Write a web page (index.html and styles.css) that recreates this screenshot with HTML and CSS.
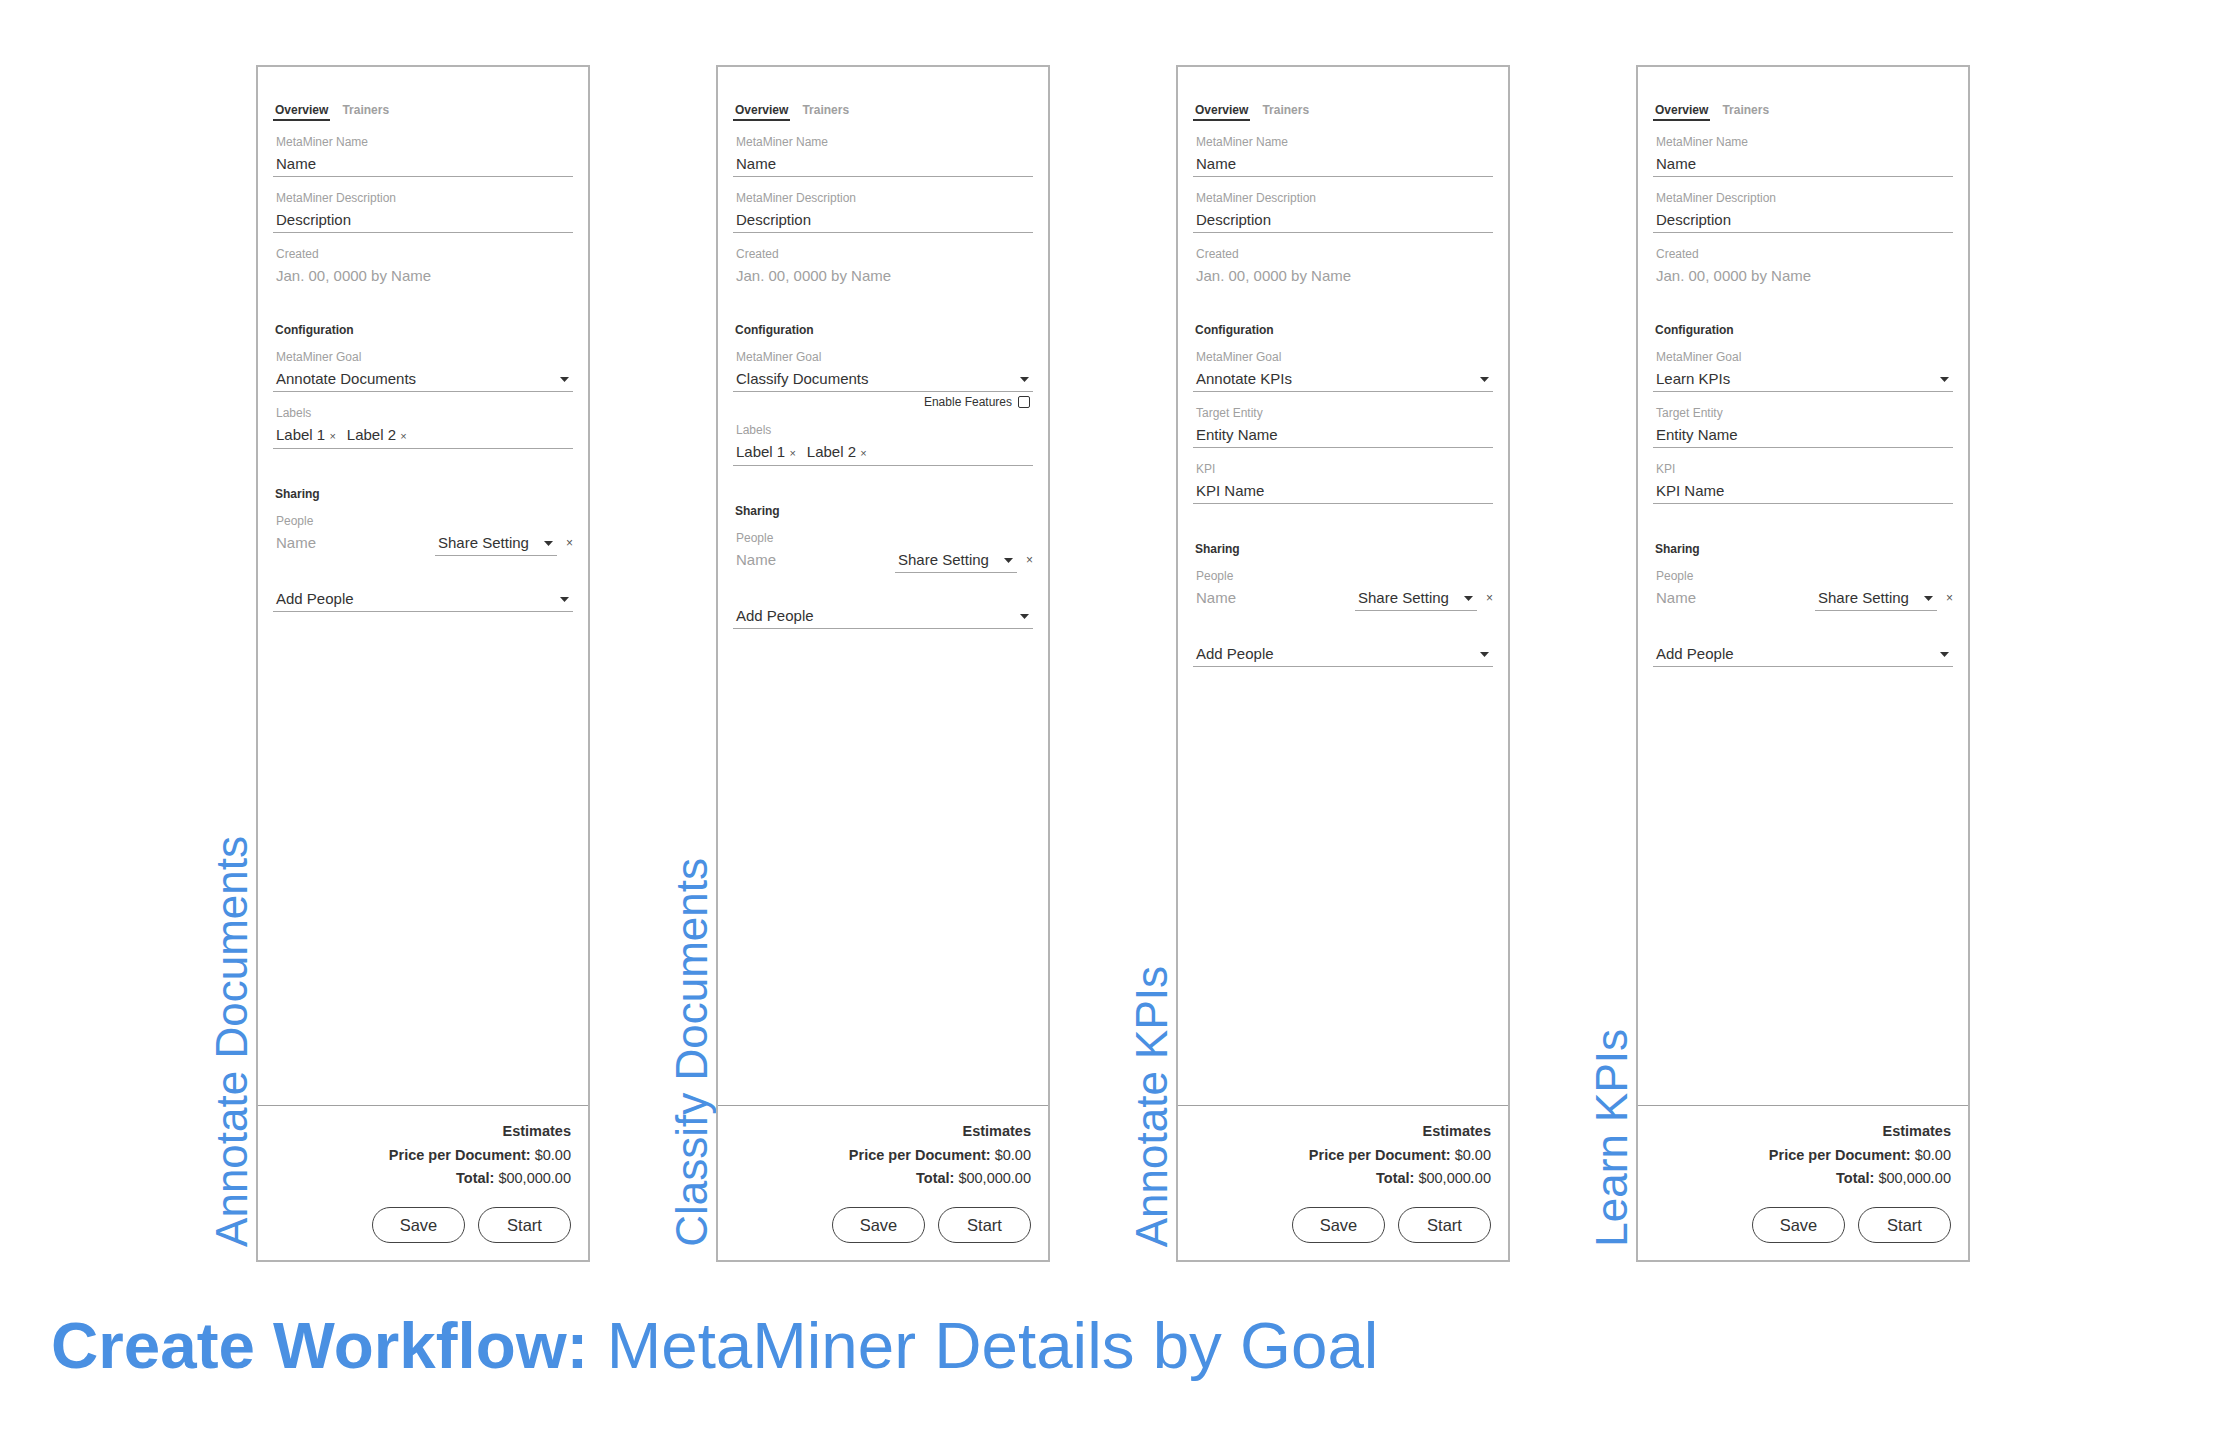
FILE: index.html
```html
<!DOCTYPE html>
<html lang="en">
<head>
    <meta charset="UTF-8">
    <meta name="viewport" content="width=device-width, initial-scale=1.0">
    <title>Create Workflow: MetaMiner Details by Goal</title>
    <link rel="stylesheet" href="styles.css">
</head>
<body>
    <div class="board">

        <!-- Annotate Documents -->
        <section class="goal">
            <h2 class="goal-label">Annotate Documents</h2>
            <div class="panel">
                <div class="panel-body">
                    <div class="tabs">
                        <span class="tab tab-active">Overview</span>
                        <span class="tab">Trainers</span>
                    </div>
                    <div class="field">
                        <div class="field-label">MetaMiner Name</div>
                        <div class="field-value">Name</div>
                    </div>
                    <div class="field">
                        <div class="field-label">MetaMiner Description</div>
                        <div class="field-value">Description</div>
                    </div>
                    <div class="field field-static">
                        <div class="field-label">Created</div>
                        <div class="field-value">Jan. 00, 0000 by Name</div>
                    </div>

                    <h3 class="section-title section-first">Configuration</h3>
                    <div class="field">
                        <div class="field-label">MetaMiner Goal</div>
                        <div class="field-value select">Annotate Documents <svg class="caret" viewBox="0 0 9 5"><polygon points="0,0 9,0 4.5,5"/></svg></div>
                    </div>
                    <div class="field">
                        <div class="field-label">Labels</div>
                        <div class="field-value chips">
                            <span class="chip">Label 1 <span class="chip-x">×</span></span>
                            <span class="chip">Label 2 <span class="chip-x">×</span></span>
                        </div>
                    </div>

                    <h3 class="section-title">Sharing</h3>
                    <div class="field field-people">
                        <div class="field-label">People</div>
                        <div class="people-row">
                            <span class="person">Name</span>
                            <div class="share-select">Share Setting <svg class="caret" viewBox="0 0 9 5"><polygon points="0,0 9,0 4.5,5"/></svg></div>
                            <span class="remove">×</span>
                        </div>
                    </div>
                    <div class="field field-add">
                        <div class="field-value select">Add People <svg class="caret" viewBox="0 0 9 5"><polygon points="0,0 9,0 4.5,5"/></svg></div>
                    </div>
                </div>
                <div class="panel-footer">
                    <div class="estimates-title">Estimates</div>
                    <div><b>Price per Document:</b> $0.00</div>
                    <div><b>Total:</b> $00,000.00</div>
                    <div class="actions">
                        <button>Save</button>
                        <button>Start</button>
                    </div>
                </div>
            </div>
        </section>

        <!-- Classify Documents -->
        <section class="goal">
            <h2 class="goal-label">Classify Documents</h2>
            <div class="panel">
                <div class="panel-body">
                    <div class="tabs">
                        <span class="tab tab-active">Overview</span>
                        <span class="tab">Trainers</span>
                    </div>
                    <div class="field">
                        <div class="field-label">MetaMiner Name</div>
                        <div class="field-value">Name</div>
                    </div>
                    <div class="field">
                        <div class="field-label">MetaMiner Description</div>
                        <div class="field-value">Description</div>
                    </div>
                    <div class="field field-static">
                        <div class="field-label">Created</div>
                        <div class="field-value">Jan. 00, 0000 by Name</div>
                    </div>

                    <h3 class="section-title section-first">Configuration</h3>
                    <div class="field">
                        <div class="field-label">MetaMiner Goal</div>
                        <div class="field-value select">Classify Documents <svg class="caret" viewBox="0 0 9 5"><polygon points="0,0 9,0 4.5,5"/></svg></div>
                    </div>
                    <div class="option-row">
                        Enable Features <span class="checkbox"></span>
                    </div>
                    <div class="field">
                        <div class="field-label">Labels</div>
                        <div class="field-value chips">
                            <span class="chip">Label 1 <span class="chip-x">×</span></span>
                            <span class="chip">Label 2 <span class="chip-x">×</span></span>
                        </div>
                    </div>

                    <h3 class="section-title">Sharing</h3>
                    <div class="field field-people">
                        <div class="field-label">People</div>
                        <div class="people-row">
                            <span class="person">Name</span>
                            <div class="share-select">Share Setting <svg class="caret" viewBox="0 0 9 5"><polygon points="0,0 9,0 4.5,5"/></svg></div>
                            <span class="remove">×</span>
                        </div>
                    </div>
                    <div class="field field-add">
                        <div class="field-value select">Add People <svg class="caret" viewBox="0 0 9 5"><polygon points="0,0 9,0 4.5,5"/></svg></div>
                    </div>
                </div>
                <div class="panel-footer">
                    <div class="estimates-title">Estimates</div>
                    <div><b>Price per Document:</b> $0.00</div>
                    <div><b>Total:</b> $00,000.00</div>
                    <div class="actions">
                        <button>Save</button>
                        <button>Start</button>
                    </div>
                </div>
            </div>
        </section>

        <!-- Annotate KPIs -->
        <section class="goal">
            <h2 class="goal-label">Annotate KPIs</h2>
            <div class="panel">
                <div class="panel-body">
                    <div class="tabs">
                        <span class="tab tab-active">Overview</span>
                        <span class="tab">Trainers</span>
                    </div>
                    <div class="field">
                        <div class="field-label">MetaMiner Name</div>
                        <div class="field-value">Name</div>
                    </div>
                    <div class="field">
                        <div class="field-label">MetaMiner Description</div>
                        <div class="field-value">Description</div>
                    </div>
                    <div class="field field-static">
                        <div class="field-label">Created</div>
                        <div class="field-value">Jan. 00, 0000 by Name</div>
                    </div>

                    <h3 class="section-title section-first">Configuration</h3>
                    <div class="field">
                        <div class="field-label">MetaMiner Goal</div>
                        <div class="field-value select">Annotate KPIs <svg class="caret" viewBox="0 0 9 5"><polygon points="0,0 9,0 4.5,5"/></svg></div>
                    </div>
                    <div class="field">
                        <div class="field-label">Target Entity</div>
                        <div class="field-value">Entity Name</div>
                    </div>
                    <div class="field">
                        <div class="field-label">KPI</div>
                        <div class="field-value">KPI Name</div>
                    </div>

                    <h3 class="section-title">Sharing</h3>
                    <div class="field field-people">
                        <div class="field-label">People</div>
                        <div class="people-row">
                            <span class="person">Name</span>
                            <div class="share-select">Share Setting <svg class="caret" viewBox="0 0 9 5"><polygon points="0,0 9,0 4.5,5"/></svg></div>
                            <span class="remove">×</span>
                        </div>
                    </div>
                    <div class="field field-add">
                        <div class="field-value select">Add People <svg class="caret" viewBox="0 0 9 5"><polygon points="0,0 9,0 4.5,5"/></svg></div>
                    </div>
                </div>
                <div class="panel-footer">
                    <div class="estimates-title">Estimates</div>
                    <div><b>Price per Document:</b> $0.00</div>
                    <div><b>Total:</b> $00,000.00</div>
                    <div class="actions">
                        <button>Save</button>
                        <button>Start</button>
                    </div>
                </div>
            </div>
        </section>

        <!-- Learn KPIs -->
        <section class="goal">
            <h2 class="goal-label">Learn KPIs</h2>
            <div class="panel">
                <div class="panel-body">
                    <div class="tabs">
                        <span class="tab tab-active">Overview</span>
                        <span class="tab">Trainers</span>
                    </div>
                    <div class="field">
                        <div class="field-label">MetaMiner Name</div>
                        <div class="field-value">Name</div>
                    </div>
                    <div class="field">
                        <div class="field-label">MetaMiner Description</div>
                        <div class="field-value">Description</div>
                    </div>
                    <div class="field field-static">
                        <div class="field-label">Created</div>
                        <div class="field-value">Jan. 00, 0000 by Name</div>
                    </div>

                    <h3 class="section-title section-first">Configuration</h3>
                    <div class="field">
                        <div class="field-label">MetaMiner Goal</div>
                        <div class="field-value select">Learn KPIs <svg class="caret" viewBox="0 0 9 5"><polygon points="0,0 9,0 4.5,5"/></svg></div>
                    </div>
                    <div class="field">
                        <div class="field-label">Target Entity</div>
                        <div class="field-value">Entity Name</div>
                    </div>
                    <div class="field">
                        <div class="field-label">KPI</div>
                        <div class="field-value">KPI Name</div>
                    </div>

                    <h3 class="section-title">Sharing</h3>
                    <div class="field field-people">
                        <div class="field-label">People</div>
                        <div class="people-row">
                            <span class="person">Name</span>
                            <div class="share-select">Share Setting <svg class="caret" viewBox="0 0 9 5"><polygon points="0,0 9,0 4.5,5"/></svg></div>
                            <span class="remove">×</span>
                        </div>
                    </div>
                    <div class="field field-add">
                        <div class="field-value select">Add People <svg class="caret" viewBox="0 0 9 5"><polygon points="0,0 9,0 4.5,5"/></svg></div>
                    </div>
                </div>
                <div class="panel-footer">
                    <div class="estimates-title">Estimates</div>
                    <div><b>Price per Document:</b> $0.00</div>
                    <div><b>Total:</b> $00,000.00</div>
                    <div class="actions">
                        <button>Save</button>
                        <button>Start</button>
                    </div>
                </div>
            </div>
        </section>

    </div>

    <h1 class="page-title"><strong>Create Workflow:</strong> MetaMiner Details by Goal</h1>
</body>
</html>
```

FILE: styles.css
```css
body {
    margin: 0;
    background-color: #ffffff;
    color: #333;
    font-family: 'Liberation Sans', Arial, sans-serif;
}

.board {
    display: flex;
    gap: 80px;
    padding: 65px 0 0 210px;
}

.goal {
    display: flex;
    align-items: flex-end;
}

.goal-label {
    margin: 0 2px 15px 0;
    writing-mode: vertical-rl;
    transform: rotate(180deg);
    font-size: 44px;
    line-height: 44px;
    font-weight: normal;
    color: #4a90e2;
    white-space: nowrap;
}

.panel {
    width: 334px;
    height: 1197px;
    box-sizing: border-box;
    border: 2px solid #b4b4b4;
    display: flex;
    flex-direction: column;
}

.panel-body {
    flex: 1;
    padding: 36px 15px 0;
}

/* tabs */

.tabs {
    display: flex;
    gap: 10px;
}

.tab {
    padding: 0 2px 2px;
    border-bottom: 2px solid transparent;
    font-size: 12px;
    line-height: 14px;
    font-weight: bold;
    color: #a0a0a0;
}

.tab-active {
    color: #333;
    border-bottom-color: #333;
}

/* fields */

.field {
    margin-top: 13px;
    border-bottom: 1px solid #a6a6a6;
}

.field-static {
    border-bottom-color: transparent;
}

.field-label {
    padding-left: 3px;
    font-size: 12px;
    line-height: 16px;
    color: #a0a0a0;
}

.field-value {
    margin-top: 4px;
    padding: 0 0 2px 3px;
    font-size: 15px;
    line-height: 20px;
    color: #333;
}

.field-static .field-value {
    color: #a0a0a0;
}

.select {
    display: flex;
    justify-content: space-between;
    align-items: center;
    padding-right: 4px;
}

.caret {
    width: 9px;
    height: 5px;
    fill: #333;
}

.chips {
    display: flex;
    gap: 11px;
}

.chip-x {
    font-size: 11px;
    color: #555;
}

.option-row {
    display: flex;
    justify-content: flex-end;
    align-items: center;
    gap: 6px;
    margin-top: 3px;
    padding-right: 3px;
    font-size: 12px;
    line-height: 14px;
    color: #333;
}

.checkbox {
    width: 10px;
    height: 10px;
    border: 1.5px solid #333;
    border-radius: 2px;
}

.section-title {
    margin: 37px 0 0;
    padding-left: 2px;
    font-size: 12px;
    line-height: 16px;
    font-weight: bold;
    color: #333;
}

.section-first {
    margin-top: 33px;
}

.section-title + .field {
    margin-top: 11px;
}

/* sharing */

.field-people {
    border-bottom: none;
}

.people-row {
    display: flex;
    align-items: flex-start;
    margin-top: 4px;
    font-size: 15px;
    line-height: 20px;
}

.person {
    flex: 1;
    padding-left: 3px;
    color: #a0a0a0;
}

.share-select {
    width: 122px;
    box-sizing: border-box;
    display: flex;
    justify-content: space-between;
    align-items: center;
    padding: 0 4px 2px 3px;
    border-bottom: 1px solid #a6a6a6;
    color: #333;
}

.remove {
    width: 16px;
    text-align: right;
    font-size: 12px;
    color: #555;
}

.field-people + .field-add {
    margin-top: 33px;
}

.field-add .field-value {
    margin-top: 0;
}

/* footer */

.panel-footer {
    border-top: 1px solid #a0a0a0;
    padding: 14px 17px 17px;
    text-align: right;
    font-size: 14.5px;
    line-height: 23.5px;
    color: #333;
}

.estimates-title {
    font-weight: bold;
}

.actions {
    display: flex;
    justify-content: flex-end;
    gap: 13px;
    margin-top: 16.5px;
}

.actions button {
    width: 93px;
    height: 36px;
    border: 1.5px solid #444;
    border-radius: 18px;
    background-color: #fff;
    font-family: 'Liberation Sans', Arial, sans-serif;
    font-size: 16.5px;
    color: #333;
}

.page-title {
    margin: 46px 0 0;
    padding-left: 51px;
    font-size: 65.5px;
    line-height: 75px;
    font-weight: normal;
    color: #4a90e2;
}
```
